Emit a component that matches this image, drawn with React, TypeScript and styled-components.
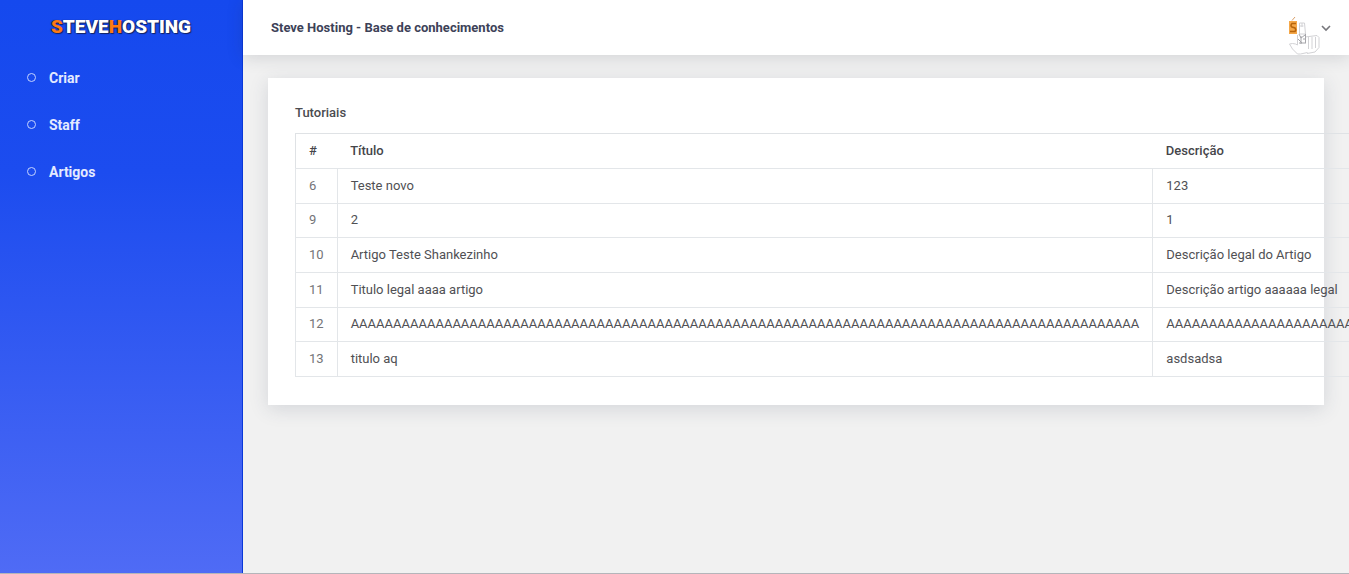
import React from "react";
import styled, { createGlobalStyle } from "styled-components";

const GlobalStyle = createGlobalStyle`
  *, *::before, *::after { box-sizing: border-box; }
  body {
    margin: 0;
    overflow-x: hidden;
    background: #f1f1f1;
    color: #4b4b4f;
    font-family: Roboto, "Liberation Sans", sans-serif;
    font-size: 13px;
    line-height: 20px;
  }
`;

const Page = styled.div`
  display: flex;
  min-height: 100vh;
  overflow-x: hidden;
  border-bottom: 1px solid #b4b5ba;
`;

const Sidebar = styled.aside`
  flex: 0 0 243px;
  background: linear-gradient(180deg, #1549ee 0%, #1c4cef 30%, #4f6bf5 100%);
  border-right: 1px solid #0a38d8;
`;

const Brand = styled.a`
  display: flex;
  justify-content: center;
  align-items: center;
  height: 54px;
  color: #fff;
  font-size: 19px;
  font-weight: 900;
  text-decoration: none;
  text-shadow: 1px 1px 1px #14235e, -1px 0 1px #14235e;
`;

const Accent = styled.span`
  color: #ff7a12;
`;

const Menu = styled.ul`
  list-style: none;
  margin: 0;
  padding: 0;
`;

const MenuLink = styled.a`
  display: flex;
  align-items: center;
  gap: 13px;
  height: 47px;
  padding-left: 27px;
  color: #e4eaff;
  font-size: 14px;
  font-weight: 700;
  text-decoration: none;
`;

const Ring = styled.span`
  width: 9px;
  height: 9px;
  border: 1px solid #c4d3ff;
  border-radius: 50%;
`;

const Main = styled.div`
  flex: 1;
  min-width: 0;
`;

const Topbar = styled.header`
  display: flex;
  justify-content: space-between;
  align-items: center;
  height: 55px;
  padding: 0 18px 0 28px;
  background: #fff;
  box-shadow: 0 2px 16px rgba(40, 44, 60, 0.16);
`;

const Heading = styled.h1`
  margin: 0;
  color: #3d4258;
  font-size: 13px;
  font-weight: 700;
`;

const UserButton = styled.button`
  display: flex;
  align-items: center;
  padding: 0;
  border: 0;
  background: none;
  color: #77777c;
`;

const Card = styled.section`
  margin: 23px 25px;
  padding: 25px 27px 28px;
  background: #fff;
  box-shadow: 0 4px 18px rgba(50, 60, 90, 0.15);
`;

const CardTitle = styled.h2`
  margin: 0 0 10px;
  color: #4b4b50;
  font-size: 13px;
  font-weight: 500;
`;

const Table = styled.table`
  height: 244px;
  border: 1px solid #dfe2e5;
  border-collapse: collapse;
  white-space: nowrap;
`;

const HeadCell = styled.th`
  padding: 7px 13px;
  border-bottom: 1px solid #e3e6e9;
  color: #45454a;
  font-weight: 500;
  text-align: left;
`;

const Cell = styled.td<{ $muted?: boolean }>`
  padding: 6px 13px;
  border: 1px solid #e3e6e9;
  color: ${(p) => (p.$muted ? "#747478" : "#505054")};
`;

const links = ["Criar", "Staff", "Artigos"];

const articles = [
  { id: 6, title: "Teste novo", text: "123" },
  { id: 9, title: "2", text: "1" },
  { id: 10, title: "Artigo Teste Shankezinho", text: "Descrição legal do Artigo" },
  { id: 11, title: "Titulo legal aaaa artigo", text: "Descrição artigo aaaaaa legal" },
  { id: 12, title: "A".repeat(93), text: "A".repeat(93) },
  { id: 13, title: "titulo aq", text: "asdsadsa" },
];

function Avatar() {
  return (
    <svg width="34" height="54" viewBox="0 0 34 54" fill="none" aria-hidden="true">
      <path d="M2 20h8v13H2z" fill="#f5a849" />
      <path d="M9 22.5H5q-2 2 0 3.500l3 1q1.500 2 0 3.500H3" stroke="#b8650c" strokeWidth="1.600" />
      <path d="M5 19.500L8 16" stroke="#d9a06a" />
      <g stroke="#d2d2d5" strokeWidth="1">
        <path d="M12.500 22h5l1 11h-6zM12.500 25h4M15 22v4" />
        <path d="M10.500 34v10l-2-1q-3-1-6 0l3 5 5 5h3l7-1.500" />
        <path d="M18 36l12-1.500 2 2v10l-4 4.500-8 1.500" />
        <path d="M21.500 36v12M25 36v12M28.500 36v11" />
      </g>
      <g stroke="#a6a6aa" strokeWidth="1">
        <path d="M12 33l2 4 4-3M11 38l4 4M14 35v8M18.500 33v9M12 42h7M16 38h3" />
      </g>
    </svg>
  );
}

export default function App() {
  return (
    <>
      <GlobalStyle />
      <Page>
        <Sidebar>
          <Brand href="#">
            <Accent>S</Accent>TEVE<Accent>H</Accent>OSTING
          </Brand>
          <nav>
            <Menu>
              {links.map((label) => (
                <li key={label}>
                  <MenuLink href="#">
                    <Ring />
                    {label}
                  </MenuLink>
                </li>
              ))}
            </Menu>
          </nav>
        </Sidebar>
        <Main>
          <Topbar>
            <Heading>Steve Hosting - Base de conhecimentos</Heading>
            <UserButton type="button" aria-label="Conta">
              <Avatar />
              <svg width="10" height="8" viewBox="0 0 10 8" fill="none" aria-hidden="true">
                <path d="M1 2l4 4 4-4" stroke="currentColor" strokeWidth="1.6" />
              </svg>
            </UserButton>
          </Topbar>
          <Card>
            <CardTitle>Tutoriais</CardTitle>
            <Table>
              <thead>
                <tr>
                  <HeadCell scope="col">#</HeadCell>
                  <HeadCell scope="col">Título</HeadCell>
                  <HeadCell scope="col">Descrição</HeadCell>
                </tr>
              </thead>
              <tbody>
                {articles.map((a) => (
                  <tr key={a.id}>
                    <Cell $muted>{a.id}</Cell>
                    <Cell>{a.title}</Cell>
                    <Cell>{a.text}</Cell>
                  </tr>
                ))}
              </tbody>
            </Table>
          </Card>
        </Main>
      </Page>
    </>
  );
}
